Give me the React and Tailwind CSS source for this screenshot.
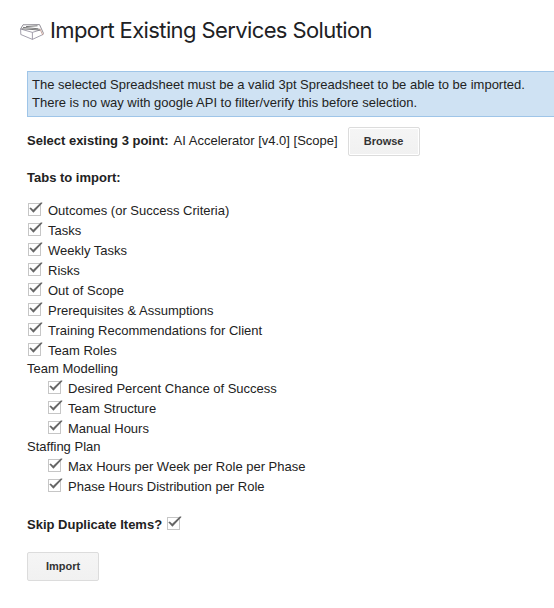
const topTabs = [
  'Outcomes (or Success Criteria)',
  'Tasks',
  'Weekly Tasks',
  'Risks',
  'Out of Scope',
  'Prerequisites & Assumptions',
  'Training Recommendations for Client',
  'Team Roles',
];
const modelling = ['Desired Percent Chance of Success', 'Team Structure', 'Manual Hours'];
const staffing = ['Max Hours per Week per Role per Phase', 'Phase Hours Distribution per Role'];

function Check() {
  return (
    <svg width="15" height="15" viewBox="0 0 15 15" className="block shrink-0">
      <rect x="0.5" y="1.5" width="12" height="12" fill="#fff" stroke="#c6c6c6" />
      <path d="M1.3 6.3 L2.8 5.4 L5.2 7.8 L12.8 0.4 L14.3 0.4 L14.3 1.2 L5.4 10.8 Z" fill="#666" />
    </svg>
  );
}

function Row({ label }) {
  return (
    <label className="flex h-5 items-start pl-px">
      <span className="pt-0.5"><Check /></span>
      <span className="ml-[5px] pt-0.5 leading-[18px]">{label}</span>
    </label>
  );
}

function Crate() {
  return (
    <svg width="24" height="16" viewBox="0 0 24 16" fill="none" stroke="#77737e" strokeWidth="0.8" strokeLinejoin="round" className="block">
      <path d="M0.6 5 L12.4 8.4 V15.4 L0.8 10.5 Z" stroke="#8c8898" />
      <path d="M12.4 8.4 L20 6 M23.4 10.3 L12.4 15.4" stroke="#8c8898" />
      <path d="M0.6 5 L3 0.8 L19.5 0.6 L23.6 9.6" />
      <path d="M1.6 4.8 L20 6 M3 3.4 L18.5 4.8 M6 2.6 L17.5 1.8" stroke="#555" />
      <path d="M19.8 4.6 L22.6 10.6 L23.6 9.6" stroke="#b9897e" />
    </svg>
  );
}

export default function App() {
  return (
    <main className="h-[608px] w-[554px] overflow-hidden bg-white font-['Liberation_Sans',Arial,sans-serif] text-[13px] leading-[18px] text-[#222]">
      <header className="flex h-[71px] items-start pl-5">
        <div className="pt-6"><Crate /></div>
        <h1 className="ml-1.5 pt-4 font-['Google_Sans','Inter',sans-serif] text-[22px] leading-7 tracking-[-0.61px] whitespace-nowrap text-[#202124]">Import Existing Services Solution</h1>
      </header>
      <div className="pl-[27px]">
        <div className="h-[46px] border border-r-0 border-[#9fc5e8] bg-[#cfe2f3] py-1 pl-1 whitespace-nowrap">
          <p>The selected Spreadsheet must be a valid 3pt Spreadsheet to be able to be imported.</p>
          <p>There is no way with google API to filter/verify this before selection.</p>
        </div>
        <div className="mt-2.5 flex h-[29px] items-start whitespace-nowrap">
          <b className="pt-[5px]">Select existing 3 point:</b>
          <span className="ml-[5px] pt-[5px]">AI Accelerator [v4.0] [Scope]</span>
          <button className="ml-2.5 h-[29px] w-[72px] rounded-xs border border-[#dcdcdc] bg-linear-to-b from-[#f5f5f5] to-[#f1f1f1] text-[11px] leading-[27px] font-bold text-[#333] shadow-[inset_0_0_0_1px_#fff]">Browse</button>
        </div>
        <h2 className="mt-[13px] font-bold">Tabs to import:</h2>
        <div className="mt-[13px]">
          {topTabs.map((t) => <Row key={t} label={t} />)}
          <p>Team Modelling</p>
          <div className="pl-5">{modelling.map((t) => <Row key={t} label={t} />)}</div>
          <p>Staffing Plan</p>
          <div className="pl-5">{staffing.map((t) => <Row key={t} label={t} />)}</div>
        </div>
        <div className="mt-5 flex items-start">
          <b>Skip Duplicate Items?</b>
          <span className="ml-[5px]"><Check /></span>
        </div>
        <button className="mt-[18px] block h-[29px] w-[72px] rounded-xs border border-[#dcdcdc] bg-linear-to-b from-[#f5f5f5] to-[#f1f1f1] text-[11px] leading-[27px] font-bold text-[#333]">Import</button>
      </div>
    </main>
  );
}
